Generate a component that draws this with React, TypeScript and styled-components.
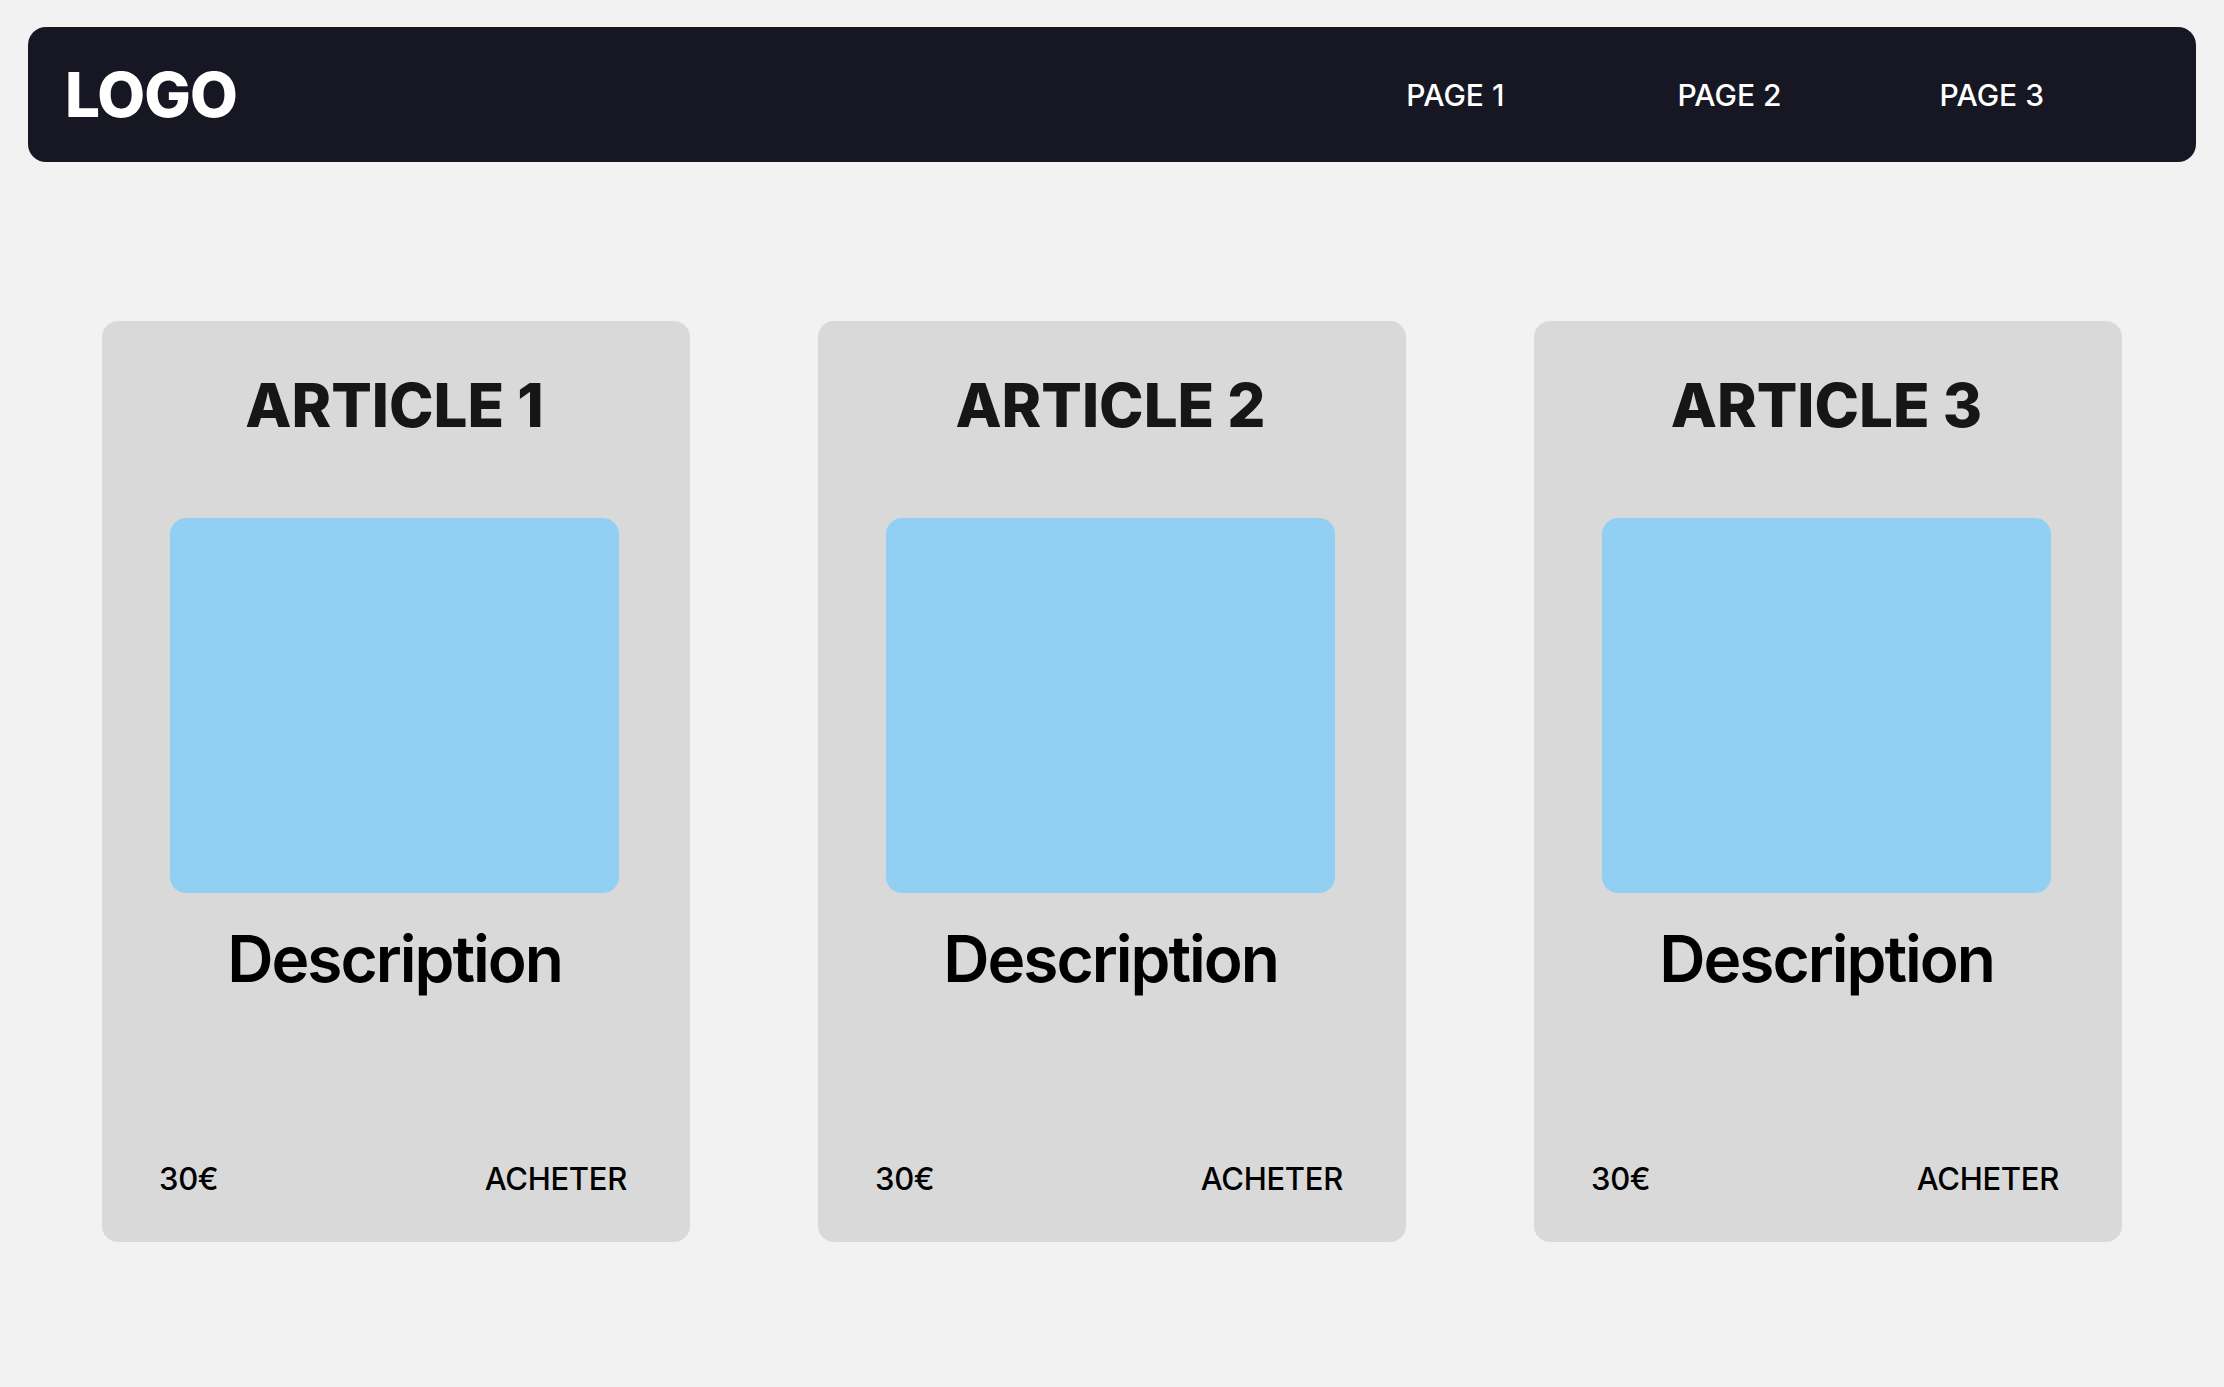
import React from "react";
import styled, { createGlobalStyle } from "styled-components";

const GlobalStyle = createGlobalStyle`
  html, body {
    margin: 0;
    padding: 0;
    background: #f2f2f2;
    font-family: Inter, "Noto Sans", sans-serif;
  }
`;

const Page = styled.div`
  width: 2224px;
  min-height: 1387px;
  padding-top: 27px;
  box-sizing: border-box;
  background: #f2f2f2;
`;

const NavBar = styled.nav`
  margin: 0 28px;
  height: 135px;
  border-radius: 18px;
  background: #171723;
  display: flex;
  align-items: center;
  justify-content: space-between;
  padding: 0 152px 0 37px;
`;

const Logo = styled.div`
  color: #ffffff;
  font-family: Inter, sans-serif;
  font-weight: 800;
  font-size: 62px;
  letter-spacing: -1px;
  line-height: 1;
`;

const NavLinks = styled.div`
  display: flex;
  align-items: center;
`;

const NavLink = styled.a<{ $offset?: number }>`
  margin-left: ${(p) => p.$offset ?? 0}px;
  color: #ffffff;
  font-family: Inter, sans-serif;
  font-weight: 500;
  font-size: 30px;
  line-height: 1;
  text-decoration: none;
`;

const CardGrid = styled.main`
  display: flex;
  justify-content: center;
  gap: 128px;
  padding-top: 159px;
`;

const Card = styled.article`
  width: 588px;
  height: 921px;
  box-sizing: border-box;
  background: #d9d9d9;
  border-radius: 16px;
  display: flex;
  flex-direction: column;
  align-items: center;
  padding: 48px 3px 44px 0;
`;

const Title = styled.h2`
  margin: 0;
  font-family: Inter, sans-serif;
  font-weight: 800;
  font-size: 60px;
  line-height: 72px;
  color: #161616;
`;

const Picture = styled.div`
  margin-top: 77px;
  width: 449px;
  height: 375px;
  border-radius: 16px;
  background: #91d0f3;
`;

const Description = styled.p`
  margin: 27px 0 0;
  font-family: Inter, sans-serif;
  font-weight: 600;
  font-size: 64px;
  letter-spacing: -2px;
  line-height: 78px;
  color: #000000;
`;

const Footer = styled.div`
  margin-top: auto;
  align-self: stretch;
  display: flex;
  justify-content: space-between;
  align-items: center;
  padding: 0 60px 0 57px;
`;

const FooterText = styled.span`
  font-family: Inter, sans-serif;
  font-weight: 500;
  font-size: 31px;
  letter-spacing: -0.3px;
  line-height: 39px;
  color: #000000;
`;

const articles = [1, 2, 3];

export default function App() {
  return (
    <>
      <GlobalStyle />
      <Page>
        <NavBar>
          <Logo>LOGO</Logo>
          <NavLinks>
            <NavLink href="#">PAGE 1</NavLink>
            <NavLink href="#" $offset={173}>PAGE 2</NavLink>
            <NavLink href="#" $offset={158}>PAGE 3</NavLink>
          </NavLinks>
        </NavBar>
        <CardGrid>
          {articles.map((n) => (
            <Card key={n}>
              <Title>ARTICLE {n}</Title>
              <Picture />
              <Description>Description</Description>
              <Footer>
                <FooterText>30€</FooterText>
                <FooterText>ACHETER</FooterText>
              </Footer>
            </Card>
          ))}
        </CardGrid>
      </Page>
    </>
  );
}
